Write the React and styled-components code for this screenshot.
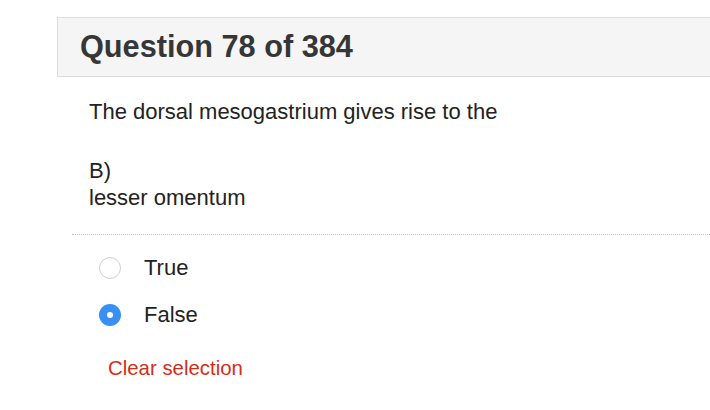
import React, { useState } from "react";
import styled, { createGlobalStyle } from "styled-components";

const GlobalStyle = createGlobalStyle`
  html, body {
    margin: 0;
    padding: 0;
    background: #fff;
    overflow: hidden;
  }
  body {
    font-family: "Liberation Sans", Arial, Helvetica, sans-serif;
    color: #222;
  }
`;

const Page = styled.div`
  width: 710px;
  height: 410px;
  padding: 17px 0 0 57px;
  box-sizing: border-box;
  overflow: hidden;
`;

const Header = styled.div`
  display: flex;
  align-items: center;
  height: 60px;
  width: 720px;
  box-sizing: border-box;
  padding-left: 22px;
  background: #f5f5f5;
  border: 1px solid #dcdcdc;
`;

const Title = styled.h2`
  margin: 0;
  font-size: 30.7px;
  font-weight: 700;
  color: #363636;
  line-height: 1;
`;

const Body = styled.div`
  padding: 21px 0 0 32px;
  font-size: 22px;
  line-height: 27px;
  color: #222;
`;

const Prompt = styled.p`
  margin: 0 0 32px;
`;

const Answer = styled.div`
  margin: 0;
`;

const Options = styled.div`
  margin: 23px 0 0 15px;
  border-top: 1px dotted #c4c4c4;
  padding: 19px 0 0 27px;
  display: flex;
  flex-direction: column;
  gap: 20px;
`;

const Option = styled.label`
  display: flex;
  align-items: center;
  height: 27px;
  font-size: 22px;
  color: #222;
  cursor: pointer;
`;

const Radio = styled.span`
  width: 22px;
  height: 22px;
  border-radius: 50%;
  box-sizing: border-box;
  margin-right: 23px;
  display: flex;
  align-items: center;
  justify-content: center;
  background: ${(p) => (p.$checked ? "#3a8ff2" : "#fff")};
  border: ${(p) => (p.$checked ? "none" : "1.5px solid #cfcfcf")};

  &::after {
    content: "";
    width: 6px;
    height: 6px;
    border-radius: 50%;
    background: #fff;
    display: ${(p) => (p.$checked ? "block" : "none")};
  }
`;

const Clear = styled.button`
  align-self: flex-start;
  margin: 7px 0 0 9px;
  padding: 0;
  border: none;
  background: none;
  font-family: inherit;
  font-size: 20.4px;
  line-height: 27px;
  color: #d42d18;
  cursor: pointer;
`;

const choices = ["True", "False"];

export default function App() {
  const [selected, setSelected] = useState("False");

  return (
    <>
      <GlobalStyle />
      <Page>
        <Header>
          <Title>Question 78 of 384</Title>
        </Header>
        <Body>
          <Prompt>The dorsal mesogastrium gives rise to the</Prompt>
          <Answer>B)</Answer>
          <Answer>lesser omentum</Answer>
        </Body>
        <Options>
          {choices.map((c) => (
            <Option key={c} onClick={() => setSelected(c)}>
              <Radio $checked={selected === c} />
              {c}
            </Option>
          ))}
          <Clear onClick={() => setSelected(null)}>Clear selection</Clear>
        </Options>
      </Page>
    </>
  );
}
